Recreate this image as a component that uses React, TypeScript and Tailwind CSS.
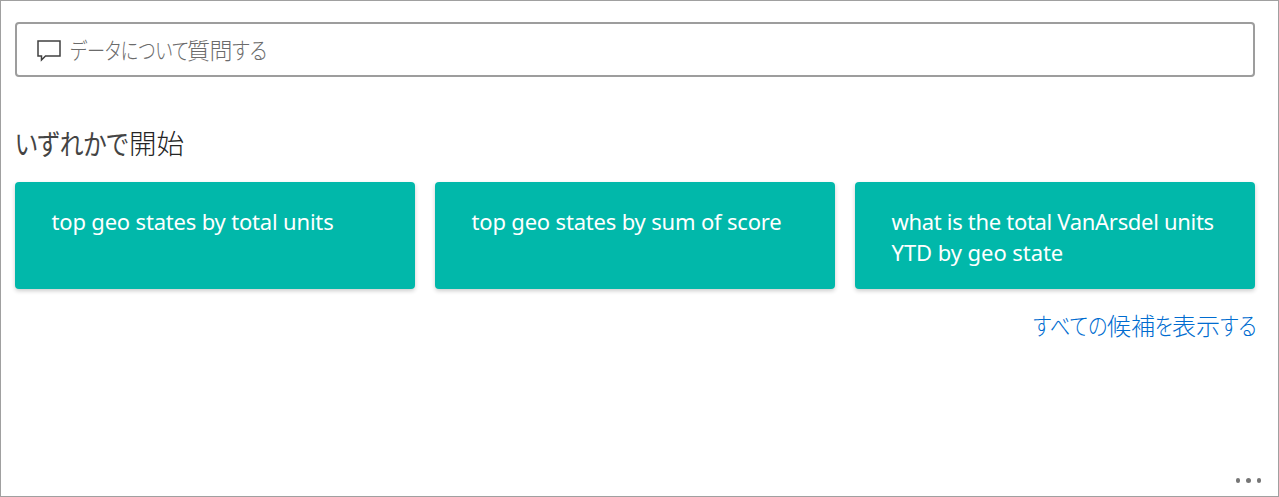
import type { ReactNode } from 'react';

const questions: ReactNode[] = [
  'top geo states by total units',
  'top geo states by sum of score',
  <>
    <span className="tracking-[-0.31px]">what is the total VanArsdel units</span>{' '}
    <span className="tracking-[-0.06px]">YTD by geo state</span>
  </>,
];

function Kana({ width, scale, children }: { width: string; scale: string; children: ReactNode }) {
  return (
    <span className={`inline-block whitespace-nowrap ${width}`}>
      <span className={`inline-block origin-left [font-feature-settings:'palt'] ${scale}`}>{children}</span>
    </span>
  );
}

export default function App() {
  return (
    <main className="flex h-[497px] w-[1279px] flex-col border border-[#a0a0a0] bg-white pt-[21px] pr-[23px] pl-3.5 font-['Noto_Sans','Noto_Sans_CJK_JP',sans-serif]">
      <div className="flex h-[55px] shrink-0 items-center rounded-[4px] border-2 border-[#9d9d9d] pl-5">
        <svg className="mt-[2px]" width="24" height="22" viewBox="0 0 24 22" fill="none" stroke="#404040" strokeWidth="1.5">
          <path d="M1 1h22v15H8.5L4.5 20V16H1z" />
        </svg>
        <div className="ml-[9px] flex text-[23px] leading-8 font-light text-[#6b6b6b]">
          <Kana width="w-[117px]" scale="scale-x-[0.79]">データについて</Kana>
          <span className="tracking-[-0.5px]">質問</span>
          <Kana width="w-[36px]" scale="scale-x-[0.85]">する</Kana>
        </div>
      </div>
      <h1 className="mt-[47px] flex h-10 shrink-0 items-center text-[28px] leading-10 font-light text-[#252525]">
        <span className="font-normal text-[#444]">
          <Kana width="w-[114px]" scale="scale-x-[0.85]">いずれかで</Kana>
        </span>
        <span className="text-[27.5px]">開始</span>
      </h1>
      <div className="mt-[18px] grid shrink-0 grid-cols-3 gap-5">
        {questions.map((question, i) => (
          <button
            key={i}
            className="flex h-[107px] items-start rounded-[4px] bg-[#01b8aa] pt-6 pr-8 pl-[36.5px] text-left text-[22px] leading-[31px] tracking-[-0.18px] text-white shadow-[0_2px_4px_rgba(0,0,0,0.2)]"
          >
            <span className="block">{question}</span>
          </button>
        ))}
      </div>
      <a href="#suggestions" className="mt-[21px] -mr-px flex shrink-0 self-end text-[24px] leading-8 font-light text-[#006cd0]">
        <Kana width="w-[74px]" scale="scale-x-[0.84]">すべての</Kana>
        <span>候補</span>
        <Kana width="w-[17px]" scale="scale-x-[0.8]">を</Kana>
        <span>表示</span>
        <Kana width="w-[36px]" scale="scale-x-[0.85]">する</Kana>
      </a>
      <button aria-label="その他" className="mt-auto mr-[-6px] mb-[13.5px] flex gap-[6px] self-end">
        <span className="size-[4.5px] rounded-full bg-[#767676]" />
        <span className="size-[4.5px] rounded-full bg-[#767676]" />
        <span className="size-[4.5px] rounded-full bg-[#767676]" />
      </button>
    </main>
  );
}
